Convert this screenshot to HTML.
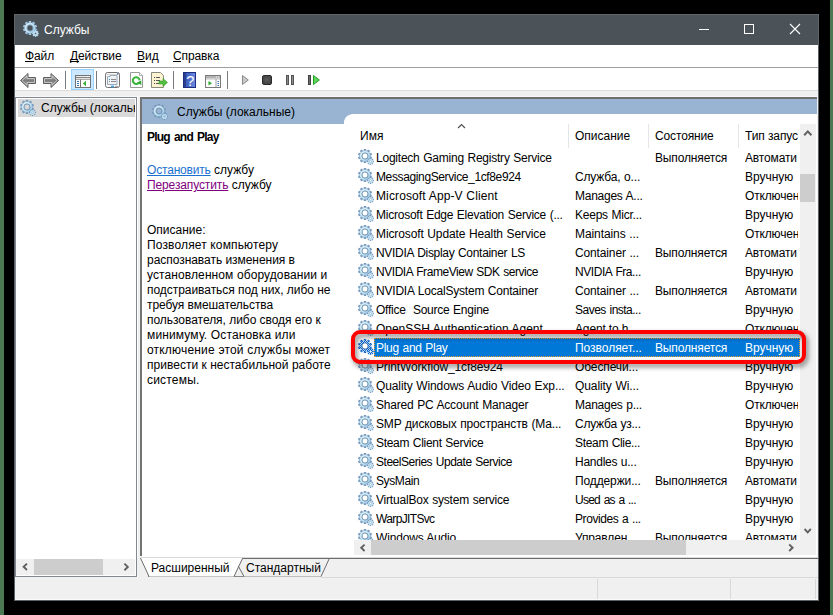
<!DOCTYPE html>
<html><head><meta charset="utf-8"><title>Службы</title>
<style>
*{margin:0;padding:0;box-sizing:border-box}
html,body{width:833px;height:615px;overflow:hidden;background:#000}
body{position:relative;font-family:"Liberation Sans",sans-serif;font-size:12px;color:#000}
.a{position:absolute}
.t{position:absolute;line-height:12px;white-space:pre;font-size:12px}
.ic{position:absolute;width:16px;height:16px}
</style></head><body>
<svg width="0" height="0" style="position:absolute"><defs>
<g id="gear">
 <path d="M5.79 2.15L5.77 0.01L8.23 0.01L8.21 2.15L8.87 2.36L10.11 0.62L12.11 2.07L10.83 3.79L11.24 4.35L13.27 3.67L14.03 6.01L11.99 6.65L11.99 7.35L14.03 7.99L13.27 10.33L11.24 9.65L10.83 10.21L12.11 11.93L10.11 13.38L8.87 11.64L8.21 11.85L8.23 13.99L5.77 13.99L5.79 11.85L5.13 11.64L3.89 13.38L1.89 11.93L3.17 10.21L2.76 9.65L0.73 10.33L-0.03 7.99L2.01 7.35L2.01 6.65L-0.03 6.01L0.73 3.67L2.76 4.35L3.17 3.79L1.89 2.07L3.89 0.62L5.13 2.36ZM4.1 7a2.9 2.9 0 1 0 5.8 0a2.9 2.9 0 1 0 -5.8 0Z" fill="#7598bd" fill-rule="evenodd"/>
 <path d="M1.5499999999999998 7a5.45 5.45 0 1 0 10.9 0a5.45 5.45 0 1 0 -10.9 0ZM4.1 7a2.9 2.9 0 1 0 5.8 0a2.9 2.9 0 1 0 -5.8 0Z" fill="url(#gr)" fill-rule="evenodd" stroke="#7fa2c4" stroke-width="0.5"/>
 <circle cx="7" cy="7" r="3.2" fill="none" stroke="#4f6d8b" stroke-width="0.6" opacity="0.8"/>
 <path d="M14.70 11.83L15.92 11.77L15.92 13.23L14.70 13.17L14.53 13.58L15.44 14.41L14.41 15.44L13.58 14.53L13.17 14.70L13.23 15.92L11.77 15.92L11.83 14.70L11.42 14.53L10.59 15.44L9.56 14.41L10.47 13.58L10.30 13.17L9.08 13.23L9.08 11.77L10.30 11.83L10.47 11.42L9.56 10.59L10.59 9.56L11.42 10.47L11.83 10.30L11.77 9.08L13.23 9.08L13.17 10.30L13.58 10.47L14.41 9.56L15.44 10.59L14.53 11.42ZM11.5 12.5a1 1 0 1 0 2 0a1 1 0 1 0 -2 0Z" fill="#7598bd" fill-rule="evenodd"/>
 <path d="M9.95 12.5a2.55 2.55 0 1 0 5.1 0a2.55 2.55 0 1 0 -5.1 0ZM11.5 12.5a1.0 1.0 0 1 0 2.0 0a1.0 1.0 0 1 0 -2.0 0Z" fill="#bfdff0" fill-rule="evenodd"/>
</g>
<g id="geart">
 <path d="M5.79 2.15L5.77 0.01L8.23 0.01L8.21 2.15L8.87 2.36L10.11 0.62L12.11 2.07L10.83 3.79L11.24 4.35L13.27 3.67L14.03 6.01L11.99 6.65L11.99 7.35L14.03 7.99L13.27 10.33L11.24 9.65L10.83 10.21L12.11 11.93L10.11 13.38L8.87 11.64L8.21 11.85L8.23 13.99L5.77 13.99L5.79 11.85L5.13 11.64L3.89 13.38L1.89 11.93L3.17 10.21L2.76 9.65L0.73 10.33L-0.03 7.99L2.01 7.35L2.01 6.65L-0.03 6.01L0.73 3.67L2.76 4.35L3.17 3.79L1.89 2.07L3.89 0.62L5.13 2.36ZM4.1 7a2.9 2.9 0 1 0 5.8 0a2.9 2.9 0 1 0 -5.8 0Z" fill="#a6cbe9" fill-rule="evenodd"/>
 <path d="M1.5499999999999998 7a5.45 5.45 0 1 0 10.9 0a5.45 5.45 0 1 0 -10.9 0ZM4.1 7a2.9 2.9 0 1 0 5.8 0a2.9 2.9 0 1 0 -5.8 0Z" fill="url(#gr)" fill-rule="evenodd" stroke="#7fa2c4" stroke-width="0.5"/>
 <circle cx="7" cy="7" r="3.2" fill="none" stroke="#4f6d8b" stroke-width="0.6" opacity="0.8"/>
 <path d="M14.70 11.83L15.92 11.77L15.92 13.23L14.70 13.17L14.53 13.58L15.44 14.41L14.41 15.44L13.58 14.53L13.17 14.70L13.23 15.92L11.77 15.92L11.83 14.70L11.42 14.53L10.59 15.44L9.56 14.41L10.47 13.58L10.30 13.17L9.08 13.23L9.08 11.77L10.30 11.83L10.47 11.42L9.56 10.59L10.59 9.56L11.42 10.47L11.83 10.30L11.77 9.08L13.23 9.08L13.17 10.30L13.58 10.47L14.41 9.56L15.44 10.59L14.53 11.42ZM11.5 12.5a1 1 0 1 0 2 0a1 1 0 1 0 -2 0Z" fill="#a6cbe9" fill-rule="evenodd"/>
 <path d="M9.95 12.5a2.55 2.55 0 1 0 5.1 0a2.55 2.55 0 1 0 -5.1 0ZM11.5 12.5a1.0 1.0 0 1 0 2.0 0a1.0 1.0 0 1 0 -2.0 0Z" fill="#bfdff0" fill-rule="evenodd"/>
</g>
<linearGradient id="gr" x1="0" y1="0" x2="1" y2="1"><stop offset="0" stop-color="#e8f8fd"/><stop offset="0.55" stop-color="#c8e9f7"/><stop offset="1" stop-color="#8fbde0"/></linearGradient>
<pattern id="chk" width="2" height="2" patternUnits="userSpaceOnUse"><rect width="2" height="2" fill="#3f86d6"/><rect width="1" height="1" fill="#0a5cc0"/><rect x="1" y="1" width="1" height="1" fill="#0a5cc0"/></pattern>
<pattern id="chk2" width="2" height="2" patternUnits="userSpaceOnUse"><rect width="2" height="2" fill="#b8dcf6"/><rect width="1" height="1" fill="#0f68cc"/><rect x="1" y="1" width="1" height="1" fill="#0f68cc"/></pattern>
<g id="gearsel">
 <path d="M5.79 2.15L5.77 0.01L8.23 0.01L8.21 2.15L8.87 2.36L10.11 0.62L12.11 2.07L10.83 3.79L11.24 4.35L13.27 3.67L14.03 6.01L11.99 6.65L11.99 7.35L14.03 7.99L13.27 10.33L11.24 9.65L10.83 10.21L12.11 11.93L10.11 13.38L8.87 11.64L8.21 11.85L8.23 13.99L5.77 13.99L5.79 11.85L5.13 11.64L3.89 13.38L1.89 11.93L3.17 10.21L2.76 9.65L0.73 10.33L-0.03 7.99L2.01 7.35L2.01 6.65L-0.03 6.01L0.73 3.67L2.76 4.35L3.17 3.79L1.89 2.07L3.89 0.62L5.13 2.36ZM4.1 7a2.9 2.9 0 1 0 5.8 0a2.9 2.9 0 1 0 -5.8 0Z" fill="url(#chk)" fill-rule="evenodd"/>
 <path d="M1.5499999999999998 7a5.45 5.45 0 1 0 10.9 0a5.45 5.45 0 1 0 -10.9 0ZM4.1 7a2.9 2.9 0 1 0 5.8 0a2.9 2.9 0 1 0 -5.8 0Z" fill="url(#chk2)" fill-rule="evenodd"/>
 <circle cx="7" cy="7" r="3.2" fill="none" stroke="#103e80" stroke-width="0.6" opacity="0.8"/>
 <path d="M14.70 11.83L15.92 11.77L15.92 13.23L14.70 13.17L14.53 13.58L15.44 14.41L14.41 15.44L13.58 14.53L13.17 14.70L13.23 15.92L11.77 15.92L11.83 14.70L11.42 14.53L10.59 15.44L9.56 14.41L10.47 13.58L10.30 13.17L9.08 13.23L9.08 11.77L10.30 11.83L10.47 11.42L9.56 10.59L10.59 9.56L11.42 10.47L11.83 10.30L11.77 9.08L13.23 9.08L13.17 10.30L13.58 10.47L14.41 9.56L15.44 10.59L14.53 11.42ZM11.5 12.5a1 1 0 1 0 2 0a1 1 0 1 0 -2 0Z" fill="url(#chk)" fill-rule="evenodd"/>
 <path d="M9.95 12.5a2.55 2.55 0 1 0 5.1 0a2.55 2.55 0 1 0 -5.1 0ZM11.5 12.5a1.0 1.0 0 1 0 2.0 0a1.0 1.0 0 1 0 -2.0 0Z" fill="url(#chk2)" fill-rule="evenodd"/>
</g>
</defs></svg>
<div class="a" style="left:0;top:0;width:4px;height:615px;background:#4b7a52"></div>
<div class="a" style="left:830px;top:0;width:3px;height:615px;background:#4b7a52"></div>
<div class="a" style="left:14px;top:14px;width:805px;height:587px;background:#f0f0f0;border:1px solid #5b6369"></div>
<div class="a" style="left:14px;top:14px;width:805px;height:31px;background:#4b5359;border:1px solid #5e666c;border-bottom:0"></div>
<svg class="a" style="left:23px;top:21px" width="16" height="16"><use href="#geart"/></svg>
<div class="t" style="left:44px;top:24px;color:#fff">Службы</div>
<div class="a" style="left:699px;top:29px;width:10px;height:1px;background:#fff"></div>
<div class="a" style="left:744px;top:24px;width:10px;height:10px;border:1px solid #fff"></div>
<svg class="a" style="left:789px;top:23px" width="12" height="12"><path d="M1 1L11 11M11 1L1 11" stroke="#fff" stroke-width="1.1"/></svg>
<div class="a" style="left:15px;top:45px;width:803px;height:22px;background:#fff"></div>
<div class="a" style="left:15px;top:67px;width:803px;height:1px;background:#a0a0a0"></div>
<div class="t" style="left:25px;top:50px;letter-spacing:-0.1px">Файл</div>
<div class="a" style="left:25px;top:61px;width:9px;height:1px;background:#000"></div>
<div class="t" style="left:70px;top:50px;letter-spacing:-0.17px">Действие</div>
<div class="a" style="left:70px;top:61px;width:9px;height:1px;background:#000"></div>
<div class="t" style="left:137px;top:50px;letter-spacing:0px">Вид</div>
<div class="a" style="left:137px;top:61px;width:8px;height:1px;background:#000"></div>
<div class="t" style="left:173px;top:50px;letter-spacing:-0.12px">Справка</div>
<div class="a" style="left:173px;top:61px;width:8px;height:1px;background:#000"></div>
<div class="a" style="left:15px;top:68px;width:803px;height:22px;background:#fff"></div>
<div class="a" style="left:71px;top:69px;width:23px;height:21px;background:#cce8ff;border:1px solid #99d1ff"></div>
<div class="a" style="left:65px;top:71px;width:1px;height:18px;background:#7a7a7a"></div>
<div class="a" style="left:96px;top:71px;width:1px;height:18px;background:#7a7a7a"></div>
<div class="a" style="left:173px;top:71px;width:1px;height:18px;background:#7a7a7a"></div>
<div class="a" style="left:227px;top:71px;width:1px;height:18px;background:#7a7a7a"></div>
<svg class="a" style="left:19px;top:72px" width="42" height="17"><defs><linearGradient id="ag" x1="0" y1="0" x2="0" y2="1"><stop offset="0" stop-color="#c0c0c0"/><stop offset="0.5" stop-color="#7c7c7c"/><stop offset="1" stop-color="#a8a8a8"/></linearGradient></defs><path d="M1.5 8.5L9 1.5V5.5H16.5V11.5H9V15.5Z" fill="url(#ag)" stroke="#5e5e5e"/><path d="M3 8.5L8 3.9V6.5H15.5V10.5H8V13.1Z" fill="none" stroke="#d2d2d2" stroke-width="0.8"/><path d="M39.5 8.5L32 1.5V5.5H24.5V11.5H32V15.5Z" fill="url(#ag)" stroke="#5e5e5e"/><path d="M38 8.5L33 3.9V6.5H25.5V10.5H33V13.1Z" fill="none" stroke="#d2d2d2" stroke-width="0.8"/></svg>
<svg class="a" style="left:75px;top:75px" width="16" height="13"><rect x="0.5" y="0.5" width="15" height="12" fill="#fff" stroke="#737373"/><rect x="1" y="1" width="14" height="1" fill="#e6e8ea"/><rect x="12" y="1" width="1" height="1" fill="#fff"/><rect x="14" y="1" width="1" height="1" fill="#fff"/><rect x="1" y="2" width="14" height="0.9" fill="#7a7a7a"/><rect x="1" y="3" width="14" height="0.9" fill="#dcdcdc"/><rect x="1" y="4" width="14" height="0.7" fill="#8a8a8a"/><rect x="5" y="4.5" width="1" height="8" fill="#737373"/><rect x="2" y="6" width="2" height="1" fill="#3b6fb0"/><rect x="2" y="8" width="2" height="1" fill="#3b6fb0"/><rect x="2" y="10" width="2" height="1" fill="#3b6fb0"/><path d="M7.8 8.5L11 5.8V11.2Z" fill="#33b033"/></svg>
<svg class="a" style="left:105px;top:72px" width="16" height="16"><rect x="0.5" y="0.5" width="14" height="15" rx="2" fill="#fafafa" stroke="#707070"/><rect x="1.5" y="2" width="12" height="0.8" fill="#c8c8c8"/><rect x="12" y="1" width="1.5" height="1.5" fill="#5a7ab0"/><path d="M2.5 12.5V4.5H5V3.5H12V12.5Z" fill="#eef2f6" stroke="#9aa9b8"/><rect x="7" y="4.2" width="1.5" height="0.8" fill="#fff"/><rect x="9.5" y="4.2" width="1.5" height="0.8" fill="#fff"/><rect x="4" y="7" width="1" height="1" fill="#2b9af0"/><rect x="6" y="7" width="5" height="1" fill="#8a8a8a"/><rect x="4" y="9" width="1" height="1" fill="#8a8a8a"/><rect x="6" y="9" width="5" height="1" fill="#8a8a8a"/><rect x="6" y="13.6" width="3" height="1.6" fill="#3aa8f0"/><rect x="10" y="13.8" width="3" height="1.2" fill="#b0b0b0"/></svg>
<svg class="a" style="left:130px;top:72px" width="14" height="16"><path d="M0.5 0.5H9.5L12.5 3.5V15.5H0.5Z" fill="#fff" stroke="#9a9a9a"/><path d="M9.5 0.5V3.5H12.5" fill="#f4f4f4" stroke="#b0b0b0"/><path d="M8.6 11.0A3.4 3.4 0 1 1 9.6 8.3" fill="none" stroke="#33b533" stroke-width="2"/><path d="M7.2 10.6L11.4 13.2L11.2 8.6Z" fill="#2ea52e"/></svg>
<svg class="a" style="left:151px;top:72px" width="18" height="16"><path d="M0.5 0.5H9.5L12.5 3.5V15.5H0.5Z" fill="#fbf3d2" stroke="#8a8a7a"/><rect x="3" y="5" width="1" height="1" fill="#444"/><rect x="5" y="5" width="4" height="1" fill="#555"/><rect x="3" y="8" width="1" height="1" fill="#444"/><rect x="5" y="8" width="4" height="1" fill="#555"/><rect x="3" y="11" width="1" height="1" fill="#444"/><rect x="5" y="11" width="3" height="1" fill="#555"/><path d="M8 9H12V6.5L16.5 10.5L12 14.5V12H8Z" fill="#55c040" stroke="#3a9a30" stroke-width="0.6"/></svg>
<svg class="a" style="left:183px;top:72px" width="13" height="16"><defs><linearGradient id="hg" x1="0" y1="0" x2="1" y2="0"><stop offset="0" stop-color="#2c4fb5"/><stop offset="1" stop-color="#6f8ce0"/></linearGradient></defs><rect x="0.5" y="0.5" width="12" height="15" fill="url(#hg)" stroke="#1c2f80"/><rect x="1" y="1" width="2" height="14" fill="#2a3f90"/><text x="7.3" y="13.5" font-family="Liberation Sans" font-size="14.5" fill="#fff" text-anchor="middle">?</text></svg>
<svg class="a" style="left:205px;top:75px" width="16" height="13"><rect x="0.5" y="0.5" width="15" height="12" fill="#fff" stroke="#7a7a7a"/><rect x="1" y="1" width="14" height="2" fill="#b4b4b4"/><rect x="11" y="1.5" width="1" height="1" fill="#fff"/><rect x="13" y="1.5" width="1" height="1" fill="#fff"/><rect x="1" y="3.5" width="14" height="0.8" fill="#9a9a9a"/><rect x="10.5" y="4" width="1" height="8" fill="#a0a0a0"/><path d="M3.5 6L7 8.3L3.5 10.6Z" fill="#2faa2f"/><rect x="12.5" y="6" width="1.5" height="1" fill="#3b6fb0"/><rect x="12.5" y="8" width="1.5" height="1" fill="#3b6fb0"/><rect x="12.5" y="10" width="1.5" height="1" fill="#3b6fb0"/></svg>
<svg class="a" style="left:242px;top:75px" width="8" height="11"><path d="M0.5 0.5L6.3 5L0.5 9.5Z" fill="#c8c8c8" stroke="#8a8a8a"/></svg>
<div class="a" style="left:262px;top:75px;width:10px;height:10px;background:radial-gradient(circle at 50% 45%,#5a5a5a,#3c3c3c);border:1px solid #2a2a2a;border-radius:2px"></div>
<div class="a" style="left:286px;top:75px;width:3px;height:10px;background:#8a8a8a;border:1px solid #555"></div>
<div class="a" style="left:291px;top:75px;width:3px;height:10px;background:#8a8a8a;border:1px solid #555"></div>
<div class="a" style="left:308px;top:75px;width:3px;height:10px;background:#6a6a6a;border:1px solid #444"></div>
<svg class="a" style="left:313px;top:75px" width="8" height="11"><path d="M0.5 0.5L6.4 5L0.5 9.5Z" fill="#5fd35f" stroke="#22a022"/></svg>
<div class="a" style="left:15px;top:97px;width:122px;height:480px;background:#fff;border:1px solid #828790"></div>
<div class="a" style="left:18px;top:99px;width:117px;height:18px;background:#d9d9d9"></div>
<svg class="a" style="left:20px;top:100px" width="16" height="16"><use href="#gear"/></svg>
<div class="a" style="left:41px;top:99px;width:94px;height:18px;overflow:hidden"><div class="t" style="left:0;top:3px">Службы (локальные)</div></div>
<div class="a" style="left:16px;top:559px;width:119px;height:16px;background:#f0f0f0"></div>
<div class="a" style="left:34px;top:559px;width:69px;height:16px;background:#cdcdcd"></div>
<div class="a" style="left:15px;top:96px;width:803px;height:1px;background:#f8f8f8"></div>
<div class="a" style="left:15px;top:90px;width:803px;height:1px;background:#dcdcdc"></div>
<div class="a" style="left:137px;top:97px;width:1px;height:480px;background:#fff"></div>
<div class="a" style="left:140px;top:97px;width:677px;height:459px;background:#fff;border-top:2px solid #6e6e6e;border-left:2px solid #747474"></div>
<div class="a" style="left:142px;top:99px;width:675px;height:25px;background:#98b4d2"></div>
<div class="a" style="left:344px;top:114px;width:473px;height:12px;background:#fff;clip-path:polygon(0 12px,0 7px,1.5px 3.8px,3.8px 1.5px,8px 0,100% 0,100% 100%)"></div>
<svg class="a" style="left:152px;top:104px" width="16" height="16"><use href="#gear"/></svg>
<div class="t" style="left:177px;top:106px;">Службы (локальные)</div>
<div class="t" style="left:147px;top:131px;letter-spacing:-0.78px;word-spacing:1.5px"><b>Plug and Play</b></div>
<div class="t" style="left:147px;top:164px;"><span style="color:#1a72d0;text-decoration:underline;letter-spacing:-0.18px">Остановить</span> службу</div>
<div class="t" style="left:147px;top:179px;"><span style="color:#800080;text-decoration:underline;letter-spacing:-0.12px">Перезапустить</span> службу</div>
<div class="t" style="left:147px;top:224px;letter-spacing:0px">Описание:</div>
<div class="t" style="left:147px;top:239px;letter-spacing:0.14px">Позволяет компьютеру</div>
<div class="t" style="left:147px;top:254px;letter-spacing:-0.04px">распознавать изменения в</div>
<div class="t" style="left:147px;top:269px;letter-spacing:0.1px">установленном оборудовании и</div>
<div class="t" style="left:147px;top:284px;letter-spacing:-0.045px">подстраиваться под них, либо не</div>
<div class="t" style="left:147px;top:299px;letter-spacing:-0.07px">требуя вмешательства</div>
<div class="t" style="left:147px;top:314px;letter-spacing:-0.035px">пользователя, либо сводя его к</div>
<div class="t" style="left:147px;top:329px;letter-spacing:0.14px">минимуму. Остановка или</div>
<div class="t" style="left:147px;top:344px;letter-spacing:0.19px">отключение этой службы может</div>
<div class="t" style="left:147px;top:359px;letter-spacing:0.02px">привести к нестабильной работе</div>
<div class="t" style="left:147px;top:374px;letter-spacing:0.2px">системы.</div>
<div class="a" style="left:344px;top:124px;width:456px;height:416px;overflow:hidden">
<div class="t" style="left:16px;top:6px;">Имя</div>
<div class="a" style="left:224px;top:0;width:1px;height:24px;background:#e5e5e5"></div>
<div class="a" style="left:304px;top:0;width:1px;height:24px;background:#e5e5e5"></div>
<div class="a" style="left:394px;top:0;width:1px;height:24px;background:#e5e5e5"></div>
<div class="t" style="left:231px;top:6px;letter-spacing:-0.015px;word-spacing:0px;">Описание</div>
<div class="t" style="left:311px;top:6px;letter-spacing:-0.143px;word-spacing:0px;">Состояние</div>
<div class="t" style="left:401px;top:6px;letter-spacing:-0.1px;width:53px;overflow:hidden;padding-bottom:5px">Тип запуска</div>
<svg class="a" style="left:14px;top:25px" width="16" height="16"><use href="#gear"/></svg>
<div class="t" style="left:32px;top:27.5px;letter-spacing:-0.228px;word-spacing:0.528px;width:192px;overflow:hidden;padding-bottom:5px">Logitech Gaming Registry Service</div>
<div class="t" style="left:311px;top:27.5px;letter-spacing:-0.147px;word-spacing:0px;width:83px;overflow:hidden;padding-bottom:5px">Выполняется</div>
<div class="t" style="left:401px;top:27.5px;letter-spacing:-0.139px;word-spacing:0px;width:53px;overflow:hidden;padding-bottom:5px">Автомати</div>
<svg class="a" style="left:14px;top:44px" width="16" height="16"><use href="#gear"/></svg>
<div class="t" style="left:32px;top:46.5px;letter-spacing:-0.372px;word-spacing:0px;width:192px;overflow:hidden;padding-bottom:5px">MessagingService_1cf8e924</div>
<div class="t" style="left:231px;top:46.5px;letter-spacing:-0.163px;word-spacing:0.463px;width:73px;overflow:hidden;padding-bottom:5px">Служба, о...</div>
<div class="t" style="left:401px;top:46.5px;letter-spacing:-0.017px;word-spacing:0px;width:53px;overflow:hidden;padding-bottom:5px">Вручную</div>
<svg class="a" style="left:14px;top:63px" width="16" height="16"><use href="#gear"/></svg>
<div class="t" style="left:32px;top:65.5px;letter-spacing:0.124px;word-spacing:0.176px;width:192px;overflow:hidden;padding-bottom:5px">Microsoft App-V Client</div>
<div class="t" style="left:231px;top:65.5px;letter-spacing:-0.25px;word-spacing:0.55px;width:73px;overflow:hidden;padding-bottom:5px">Manages A...</div>
<div class="t" style="left:401px;top:65.5px;letter-spacing:-0.15px;word-spacing:0px;width:53px;overflow:hidden;padding-bottom:5px">Отключен</div>
<svg class="a" style="left:14px;top:82px" width="16" height="16"><use href="#gear"/></svg>
<div class="t" style="left:32px;top:84.5px;letter-spacing:-0.24px;word-spacing:0.54px;width:192px;overflow:hidden;padding-bottom:5px">Microsoft Edge Elevation Service (...</div>
<div class="t" style="left:231px;top:84.5px;letter-spacing:-0.23px;word-spacing:0.53px;width:73px;overflow:hidden;padding-bottom:5px">Keeps Micr...</div>
<div class="t" style="left:401px;top:84.5px;letter-spacing:-0.017px;word-spacing:0px;width:53px;overflow:hidden;padding-bottom:5px">Вручную</div>
<svg class="a" style="left:14px;top:101px" width="16" height="16"><use href="#gear"/></svg>
<div class="t" style="left:32px;top:103.5px;letter-spacing:-0.114px;word-spacing:0.414px;width:192px;overflow:hidden;padding-bottom:5px">Microsoft Update Health Service</div>
<div class="t" style="left:231px;top:103.5px;letter-spacing:-0.084px;word-spacing:0.384px;width:73px;overflow:hidden;padding-bottom:5px">Maintains ...</div>
<div class="t" style="left:401px;top:103.5px;letter-spacing:-0.15px;word-spacing:0px;width:53px;overflow:hidden;padding-bottom:5px">Отключен</div>
<svg class="a" style="left:14px;top:120px" width="16" height="16"><use href="#gear"/></svg>
<div class="t" style="left:32px;top:122.5px;letter-spacing:-0.304px;word-spacing:0.604px;width:192px;overflow:hidden;padding-bottom:5px">NVIDIA Display Container LS</div>
<div class="t" style="left:231px;top:122.5px;letter-spacing:-0.14px;word-spacing:0.44px;width:73px;overflow:hidden;padding-bottom:5px">Container ...</div>
<div class="t" style="left:311px;top:122.5px;letter-spacing:-0.147px;word-spacing:0px;width:83px;overflow:hidden;padding-bottom:5px">Выполняется</div>
<div class="t" style="left:401px;top:122.5px;letter-spacing:-0.139px;word-spacing:0px;width:53px;overflow:hidden;padding-bottom:5px">Автомати</div>
<svg class="a" style="left:14px;top:139px" width="16" height="16"><use href="#gear"/></svg>
<div class="t" style="left:32px;top:141.5px;letter-spacing:-0.456px;word-spacing:0.756px;width:192px;overflow:hidden;padding-bottom:5px">NVIDIA FrameView SDK service</div>
<div class="t" style="left:231px;top:141.5px;letter-spacing:-0.432px;word-spacing:0.732px;width:73px;overflow:hidden;padding-bottom:5px">NVIDIA Fra...</div>
<div class="t" style="left:401px;top:141.5px;letter-spacing:-0.017px;word-spacing:0px;width:53px;overflow:hidden;padding-bottom:5px">Вручную</div>
<svg class="a" style="left:14px;top:158px" width="16" height="16"><use href="#gear"/></svg>
<div class="t" style="left:32px;top:160.5px;letter-spacing:-0.206px;word-spacing:0.506px;width:192px;overflow:hidden;padding-bottom:5px">NVIDIA LocalSystem Container</div>
<div class="t" style="left:231px;top:160.5px;letter-spacing:-0.14px;word-spacing:0.44px;width:73px;overflow:hidden;padding-bottom:5px">Container ...</div>
<div class="t" style="left:311px;top:160.5px;letter-spacing:-0.147px;word-spacing:0px;width:83px;overflow:hidden;padding-bottom:5px">Выполняется</div>
<div class="t" style="left:401px;top:160.5px;letter-spacing:-0.139px;word-spacing:0px;width:53px;overflow:hidden;padding-bottom:5px">Автомати</div>
<svg class="a" style="left:14px;top:177px" width="16" height="16"><use href="#gear"/></svg>
<div class="t" style="left:32px;top:179.5px;letter-spacing:-0.245px;word-spacing:0.545px;width:192px;overflow:hidden;padding-bottom:5px">Office  Source Engine</div>
<div class="t" style="left:231px;top:179.5px;letter-spacing:-0.504px;word-spacing:0.804px;width:73px;overflow:hidden;padding-bottom:5px">Saves insta...</div>
<div class="t" style="left:401px;top:179.5px;letter-spacing:-0.017px;word-spacing:0px;width:53px;overflow:hidden;padding-bottom:5px">Вручную</div>
<svg class="a" style="left:14px;top:196px" width="16" height="16"><use href="#gear"/></svg>
<div class="t" style="left:32px;top:198.5px;letter-spacing:-0.023px;word-spacing:0.323px;width:192px;overflow:hidden;padding-bottom:5px">OpenSSH Authentication Agent</div>
<div class="t" style="left:231px;top:198.5px;letter-spacing:-0.15px;word-spacing:0px;width:73px;overflow:hidden;padding-bottom:5px">Agent to h...</div>
<div class="t" style="left:401px;top:198.5px;letter-spacing:-0.15px;word-spacing:0px;width:53px;overflow:hidden;padding-bottom:5px">Отключен</div>
<div class="a" style="left:30px;top:214px;width:426px;height:19px;background:#0078d7;outline:1px dotted #f0a030;outline-offset:-1px"></div>
<svg class="a" style="left:14px;top:215px" width="16" height="16"><use href="#gearsel"/></svg>
<div class="t" style="left:32px;top:217.5px;color:#fff;letter-spacing:-0.278px;word-spacing:0.578px;width:192px;overflow:hidden;padding-bottom:5px">Plug and Play</div>
<div class="t" style="left:231px;top:217.5px;color:#fff;letter-spacing:-0.03px;word-spacing:0px;width:73px;overflow:hidden;padding-bottom:5px">Позволяет...</div>
<div class="t" style="left:311px;top:217.5px;color:#fff;letter-spacing:-0.147px;word-spacing:0px;width:83px;overflow:hidden;padding-bottom:5px">Выполняется</div>
<div class="t" style="left:401px;top:217.5px;color:#fff;letter-spacing:-0.017px;word-spacing:0px;width:53px;overflow:hidden;padding-bottom:5px">Вручную</div>
<svg class="a" style="left:14px;top:234px" width="16" height="16"><use href="#gear"/></svg>
<div class="t" style="left:32px;top:236.5px;letter-spacing:-0.138px;word-spacing:0px;width:192px;overflow:hidden;padding-bottom:5px">PrintWorkflow_1cf8e924</div>
<div class="t" style="left:231px;top:236.5px;letter-spacing:-0.108px;word-spacing:0px;width:73px;overflow:hidden;padding-bottom:5px">Обеспечи...</div>
<div class="t" style="left:401px;top:236.5px;letter-spacing:-0.017px;word-spacing:0px;width:53px;overflow:hidden;padding-bottom:5px">Вручную</div>
<svg class="a" style="left:14px;top:253px" width="16" height="16"><use href="#gear"/></svg>
<div class="t" style="left:32px;top:255.5px;letter-spacing:-0.105px;word-spacing:0.405px;width:192px;overflow:hidden;padding-bottom:5px">Quality Windows Audio Video Exp...</div>
<div class="t" style="left:231px;top:255.5px;letter-spacing:-0.082px;word-spacing:0.382px;width:73px;overflow:hidden;padding-bottom:5px">Quality Wi...</div>
<div class="t" style="left:401px;top:255.5px;letter-spacing:-0.017px;word-spacing:0px;width:53px;overflow:hidden;padding-bottom:5px">Вручную</div>
<svg class="a" style="left:14px;top:272px" width="16" height="16"><use href="#gear"/></svg>
<div class="t" style="left:32px;top:274.5px;letter-spacing:-0.188px;word-spacing:0.488px;width:192px;overflow:hidden;padding-bottom:5px">Shared PC Account Manager</div>
<div class="t" style="left:231px;top:274.5px;letter-spacing:-0.252px;word-spacing:0.552px;width:73px;overflow:hidden;padding-bottom:5px">Manages p...</div>
<div class="t" style="left:401px;top:274.5px;letter-spacing:-0.15px;word-spacing:0px;width:53px;overflow:hidden;padding-bottom:5px">Отключен</div>
<svg class="a" style="left:14px;top:291px" width="16" height="16"><use href="#gear"/></svg>
<div class="t" style="left:32px;top:293.5px;letter-spacing:-0.148px;word-spacing:0.448px;width:192px;overflow:hidden;padding-bottom:5px">SMP дисковых пространств (Ма...</div>
<div class="t" style="left:231px;top:293.5px;letter-spacing:-0.234px;word-spacing:0.534px;width:73px;overflow:hidden;padding-bottom:5px">Служба уз...</div>
<div class="t" style="left:401px;top:293.5px;letter-spacing:-0.017px;word-spacing:0px;width:53px;overflow:hidden;padding-bottom:5px">Вручную</div>
<svg class="a" style="left:14px;top:310px" width="16" height="16"><use href="#gear"/></svg>
<div class="t" style="left:32px;top:312.5px;letter-spacing:-0.297px;word-spacing:0.597px;width:192px;overflow:hidden;padding-bottom:5px">Steam Client Service</div>
<div class="t" style="left:231px;top:312.5px;letter-spacing:-0.325px;word-spacing:0.625px;width:73px;overflow:hidden;padding-bottom:5px">Steam Clie...</div>
<div class="t" style="left:401px;top:312.5px;letter-spacing:-0.017px;word-spacing:0px;width:53px;overflow:hidden;padding-bottom:5px">Вручную</div>
<svg class="a" style="left:14px;top:329px" width="16" height="16"><use href="#gear"/></svg>
<div class="t" style="left:32px;top:331.5px;letter-spacing:-0.477px;word-spacing:0.777px;width:192px;overflow:hidden;padding-bottom:5px">SteelSeries Update Service</div>
<div class="t" style="left:231px;top:331.5px;letter-spacing:-0.259px;word-spacing:0.559px;width:73px;overflow:hidden;padding-bottom:5px">Handles u...</div>
<div class="t" style="left:401px;top:331.5px;letter-spacing:-0.017px;word-spacing:0px;width:53px;overflow:hidden;padding-bottom:5px">Вручную</div>
<svg class="a" style="left:14px;top:348px" width="16" height="16"><use href="#gear"/></svg>
<div class="t" style="left:32px;top:350.5px;letter-spacing:-0.402px;word-spacing:0px;width:192px;overflow:hidden;padding-bottom:5px">SysMain</div>
<div class="t" style="left:231px;top:350.5px;letter-spacing:-0.12px;word-spacing:0px;width:73px;overflow:hidden;padding-bottom:5px">Поддержи...</div>
<div class="t" style="left:311px;top:350.5px;letter-spacing:-0.147px;word-spacing:0px;width:83px;overflow:hidden;padding-bottom:5px">Выполняется</div>
<div class="t" style="left:401px;top:350.5px;letter-spacing:-0.139px;word-spacing:0px;width:53px;overflow:hidden;padding-bottom:5px">Автомати</div>
<svg class="a" style="left:14px;top:367px" width="16" height="16"><use href="#gear"/></svg>
<div class="t" style="left:32px;top:369.5px;letter-spacing:-0.194px;word-spacing:0.494px;width:192px;overflow:hidden;padding-bottom:5px">VirtualBox system service</div>
<div class="t" style="left:231px;top:369.5px;letter-spacing:-0.748px;word-spacing:1.048px;width:73px;overflow:hidden;padding-bottom:5px">Used as a ...</div>
<div class="t" style="left:401px;top:369.5px;letter-spacing:-0.017px;word-spacing:0px;width:53px;overflow:hidden;padding-bottom:5px">Вручную</div>
<svg class="a" style="left:14px;top:386px" width="16" height="16"><use href="#gear"/></svg>
<div class="t" style="left:32px;top:388.5px;letter-spacing:-0.641px;word-spacing:0px;width:192px;overflow:hidden;padding-bottom:5px">WarpJITSvc</div>
<div class="t" style="left:231px;top:388.5px;letter-spacing:-0.403px;word-spacing:0.703px;width:73px;overflow:hidden;padding-bottom:5px">Provides a ...</div>
<div class="t" style="left:401px;top:388.5px;letter-spacing:-0.017px;word-spacing:0px;width:53px;overflow:hidden;padding-bottom:5px">Вручную</div>
<svg class="a" style="left:14px;top:405px" width="16" height="16"><use href="#gear"/></svg>
<div class="t" style="left:32px;top:407.5px;letter-spacing:-0.15px;word-spacing:0px;width:192px;overflow:hidden;padding-bottom:5px">Windows Audio</div>
<div class="t" style="left:231px;top:407.5px;letter-spacing:-0.15px;word-spacing:0px;width:73px;overflow:hidden;padding-bottom:5px">Управлен...</div>
<div class="t" style="left:311px;top:407.5px;letter-spacing:-0.147px;word-spacing:0px;width:83px;overflow:hidden;padding-bottom:5px">Выполняется</div>
<div class="t" style="left:401px;top:407.5px;letter-spacing:-0.139px;word-spacing:0px;width:53px;overflow:hidden;padding-bottom:5px">Автомати</div>
</div>
<svg class="a" style="left:457px;top:123px" width="10" height="7"><path d="M1 5L4.5 1.5L8 5" fill="none" stroke="#505050" stroke-width="1.2"/></svg>
<div class="a" style="left:800px;top:124px;width:16px;height:416px;background:#f0f0f0"></div>
<div class="a" style="left:800px;top:174px;width:15px;height:28px;background:#cdcdcd"></div>
<svg class="a" style="left:803px;top:129px" width="10" height="8"><path d="M1.2 6.2L4.8 2.4L8.4 6.2" fill="none" stroke="#606060" stroke-width="2"/></svg>
<div class="a" style="left:354px;top:540px;width:462px;height:15px;background:#f0f0f0"></div>
<div class="a" style="left:371px;top:540px;width:315px;height:15px;background:#cdcdcd"></div>
<svg class="a" style="left:0;top:0" width="833" height="615"><g fill="none" stroke="#606060" stroke-width="1.9"><path d="M27 563.6L23.6 566.8L27 570"/><path d="M124.4 563.6L127.8 566.9L124.4 570.2"/><path d="M364.6 544.6L361.2 547.8L364.6 551"/><path d="M789.2 544.4L792.6 547.7L789.2 551"/><path d="M804.6 529L807.7 532.3L810.8 529"/></g></svg>
<div class="a" style="left:351px;top:330px;width:455px;height:34px;border:4px solid #ff0000;border-radius:9px;filter:drop-shadow(2px 3px 2.5px rgba(0,0,0,0.5))"></div>
<div class="a" style="left:142px;top:556px;width:676px;height:1px;background:#fff"></div>
<div class="a" style="left:141px;top:557px;width:677px;height:1px;background:#dadada"></div>
<div class="a" style="left:137px;top:558px;width:681px;height:18px;background:#f0f0f0"></div>
<div class="a" style="left:329px;top:558px;width:489px;height:1px;background:#6d6d6d"></div>
<div class="a" style="left:148px;top:576px;width:173px;height:1px;background:#8a8a8a"></div>
<svg class="a" style="left:132px;top:550px" width="210" height="30"><path d="M8.5 8L17 26.5H102L110 8Z" fill="#fff"/><path d="M106.5 17L112 26.5H189L197 8.5H110.5Z" fill="#f0f0f0"/><path d="M8.5 8L17 26.5M102 26.5L110.5 8.5M106.5 16.5L112 26.5M189 26.5L197.3 8.5" fill="none" stroke="#6d6d6d" stroke-width="1"/><path d="M110 8.5H210" stroke="#6d6d6d" stroke-width="1"/></svg>
<div class="t" style="left:151px;top:562px;">Расширенный</div>
<div class="t" style="left:246px;top:562px;">Стандартный</div>
<div class="a" style="left:321px;top:577px;width:497px;height:1px;background:#d9d9d9"></div>
<div class="a" style="left:815px;top:579px;width:1px;height:20px;background:#d9d9d9"></div>
<div class="a" style="left:597px;top:579px;width:1px;height:20px;background:#d9d9d9"></div>
<div class="a" style="left:730px;top:579px;width:1px;height:20px;background:#d9d9d9"></div>
<div class="a" style="left:15px;top:599px;width:803px;height:1px;background:#fafafa"></div>
</body></html>
